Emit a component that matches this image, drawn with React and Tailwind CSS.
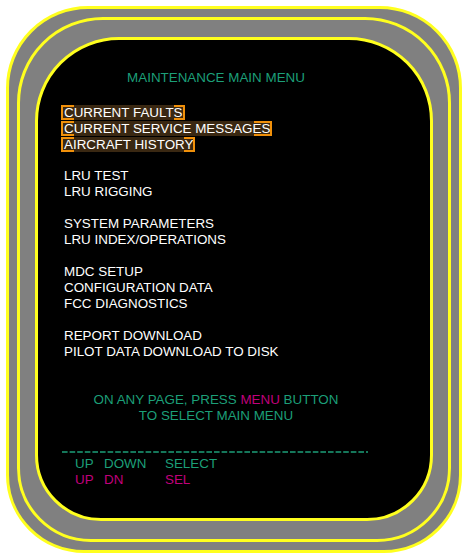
import React from "react";

const FONT = { fontFamily: '"Liberation Sans", Arial, sans-serif' };

function Hl({ children, lw = 13, rw = 11 }) {
  return (
    <div className="h-[16px] flex items-center">
      <span className="relative inline-block h-[15px] leading-[15px] pl-[3px] pr-[2px] ml-[-3px] bg-[#3a2812] text-white">
        {children}
        <span
          className="absolute left-0 top-0 bottom-0 border-2 border-r-0 border-[#f0900a]"
          style={{ width: lw }}
        />
        <span
          className="absolute right-0 top-0 bottom-0 border-2 border-l-0 border-[#f0900a]"
          style={{ width: rw }}
        />
      </span>
    </div>
  );
}

function Item({ children }) {
  return <div className="h-[16px] leading-[16px] text-white">{children}</div>;
}

const Gap = () => <div className="h-[16px]" />;

export default function App() {
  return (
    <div className="w-[470px] h-[559px] bg-white pt-[6px] pl-[6px]" style={FONT}>
      <div className="w-[456px] h-[547px] rounded-t-[82px] rounded-b-[78px] border-[3px] border-[#ffff1e] bg-[#808080] p-[8px]">
        <div className="w-full h-full rounded-t-[86px] rounded-b-[74px] border-[3px] border-[#ffff1e] bg-[#808080] pt-[17px] pb-[18px] px-[15px]">
          <div className="w-full h-full rounded-t-[84px] rounded-b-[66px] border-[3px] border-[#ffff1e] bg-black text-[13.4px]">
            <div className="w-[356px] pt-[30px]">
              <div className="h-[16px] leading-[16px] text-center text-[#1c9f78]">
                MAINTENANCE MAIN MENU
              </div>
              <div className="pl-[26px] mt-[18px]">
                <Hl>CURRENT FAULTS</Hl>
                <Hl rw={18}>CURRENT SERVICE MESSAGES</Hl>
                <Hl>AIRCRAFT HISTORY</Hl>
                <Gap />
                <Item>LRU TEST</Item>
                <Item>LRU RIGGING</Item>
                <Gap />
                <Item>SYSTEM PARAMETERS</Item>
                <Item>LRU INDEX/OPERATIONS</Item>
                <Gap />
                <Item>MDC SETUP</Item>
                <Item>CONFIGURATION DATA</Item>
                <Item>FCC DIAGNOSTICS</Item>
                <Gap />
                <Item>REPORT DOWNLOAD</Item>
                <Item>PILOT DATA DOWNLOAD TO DISK</Item>
              </div>
              <div className="mt-[32px] text-center text-[#1c9f78] leading-[16px]">
                <div>
                  ON ANY PAGE, PRESS <span className="text-[#c0007c]">MENU</span> BUTTON
                </div>
                <div>TO SELECT MAIN MENU</div>
              </div>
              <div className="h-[16px]" />
              <div className="h-[16px] pl-[24px] flex items-end">
                <svg width="306" height="4" className="block mb-[2px]">
                  <line x1="0" y1="2" x2="306" y2="2" stroke="#1c9f78" strokeWidth="1.3" strokeDasharray="5.6 2" />
                </svg>
              </div>
              <div className="pl-[37px] leading-[16px]">
                <div className="flex text-[#1c9f78]">
                  <span className="w-[29px]">UP</span>
                  <span className="w-[61px]">DOWN</span>
                  <span>SELECT</span>
                </div>
                <div className="flex text-[#c0007c]">
                  <span className="w-[29px]">UP</span>
                  <span className="w-[61px]">DN</span>
                  <span>SEL</span>
                </div>
              </div>
            </div>
          </div>
        </div>
      </div>
    </div>
  );
}
